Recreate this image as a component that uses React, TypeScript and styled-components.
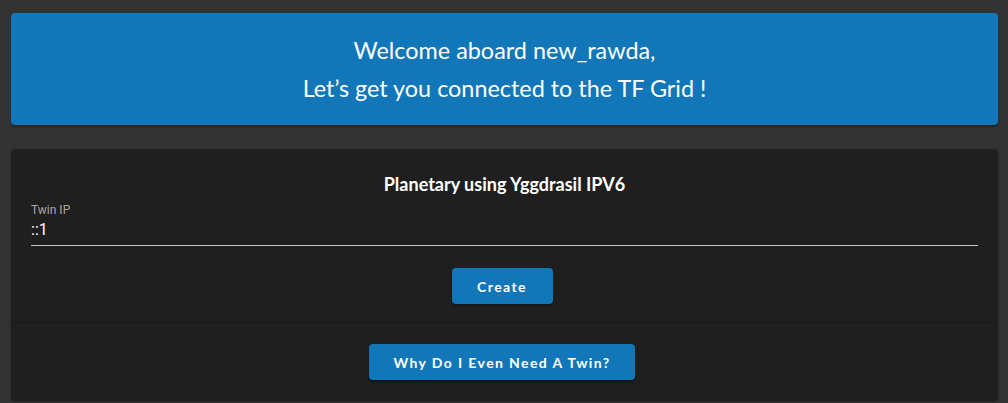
import React from "react";
import styled, { createGlobalStyle } from "styled-components";

const Global = createGlobalStyle`
  html, body { margin: 0; padding: 0; background: #333333; }
  body { font-family: Lato, "Open Sans", sans-serif; }
`;

const Page = styled.div`
  display: flex;
  flex-direction: column;
  padding: 13px 10px 0 11px;
  height: 403px;
  box-sizing: border-box;
  overflow: hidden;
`;

const Banner = styled.div`
  background: #1177b9;
  border-radius: 4px;
  height: 112px;
  box-sizing: border-box;
  display: flex;
  flex-direction: column;
  align-items: center;
  justify-content: center;
  box-shadow: 0 2px 2px rgba(0, 0, 0, 0.35);
  color: #ffffff;
  font-family: Lato, sans-serif;
  font-size: 23.4px;
  line-height: 38px;
  padding-bottom: 0;
`;

const Card = styled.div<{ $first?: boolean }>`
  background: #1f1f1f;
  border-radius: ${(p) => (p.$first ? "4px 4px 0 0" : "0 0 4px 4px")};
  margin-top: ${(p) => (p.$first ? "24px" : "0")};
  display: flex;
  flex-direction: column;
  align-items: center;
  box-shadow: 0 1px 3px rgba(0, 0, 0, 0.3);
  position: relative;
`;

const FormCard = styled(Card)`
  height: 174px;
  box-sizing: border-box;
  padding: 23px 20px 0;
`;

const HelpCard = styled(Card)`
  height: 78px;
  box-sizing: border-box;
  padding: 21px 20px 0;
  box-shadow: 0 -1px 1px rgba(0, 0, 0, 0.12), 0 1px 3px rgba(0, 0, 0, 0.3);
`;

const Title = styled.h2`
  margin: 0;
  color: #ffffff;
  font-family: Lato, sans-serif;
  font-weight: 700;
  font-size: 18px;
  line-height: 24px;
  text-align: center;
`;

const Field = styled.div`
  align-self: stretch;
  margin-top: 7px;
  border-bottom: 1px solid #c4c4c4;
  display: flex;
  flex-direction: column;
`;

const Label = styled.label`
  color: #a8a8a8;
  font-family: Roboto, sans-serif;
  font-size: 12px;
  line-height: 15px;
`;

const Value = styled.div`
  color: #ffffff;
  font-family: Roboto, sans-serif;
  font-size: 16px;
  line-height: 24px;
  padding-bottom: 3px;
`;

const Actions = styled.div<{ $top: number }>`
  align-self: stretch;
  display: flex;
  justify-content: center;
  padding-right: 5px;
  margin-top: ${(p) => p.$top}px;
`;

const Button = styled.button<{ $width?: number }>`
  background: #1177b9;
  color: #ffffff;
  border: none;
  border-radius: 4px;
  height: 36px;
  padding: 0 24px;
  width: ${(p) => (p.$width ? `${p.$width}px` : "auto")};
  font-family: Lato, sans-serif;
  font-weight: 700;
  font-size: 14px;
  letter-spacing: 1.4px;
  box-shadow: 0 2px 2px rgba(0, 0, 0, 0.35);
  cursor: pointer;
`;

export default function App() {
  return (
    <>
      <Global />
      <Page>
        <Banner>
          <div>Welcome aboard new_rawda,</div>
          <div>Let’s get you connected to the TF Grid !</div>
        </Banner>
        <FormCard $first>
          <Title>Planetary using Yggdrasil IPV6</Title>
          <Field>
            <Label>Twin IP</Label>
            <Value>::1</Value>
          </Field>
          <Actions $top={22}>
            <Button $width={101}>Create</Button>
          </Actions>
        </FormCard>
        <HelpCard>
          <Actions $top={0}>
            <Button>Why Do I Even Need A Twin?</Button>
          </Actions>
        </HelpCard>
      </Page>
    </>
  );
}
